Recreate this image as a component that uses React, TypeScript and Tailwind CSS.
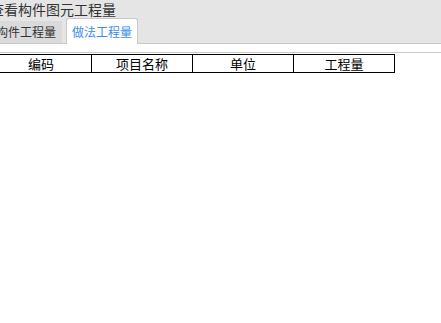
export default function App() {
  const cols = ["编码", "项目名称", "单位", "工程量"];
  return (
    <div className="w-[441px] h-[323px] bg-white overflow-hidden font-['Noto_Sans_CJK_SC','Noto_Sans',sans-serif]">
      <div className="ml-[-10px]">
        <div className="bg-[#e5e5e5] border-b border-[#c9c9c9]">
          <div className="h-[18px] text-[14px] leading-[18px] text-[#333333] whitespace-nowrap">查看构件图元工程量</div>
          <div className="h-[25px] flex items-end">
            <div className="h-[22px] px-[6px] bg-[#dadada] text-[12px] leading-[22px] text-[#333333] whitespace-nowrap">构件工程量</div>
            <div className="ml-[4px] h-[26px] -mb-px px-[5px] bg-white border border-b-0 border-[#c9c9c9] rounded-t-[3px] text-[12px] leading-[25px] text-[#3b8ee8] whitespace-nowrap">
              做法工程量
            </div>
          </div>
        </div>
        <div className="h-[8px]" />
        <div className="border-t border-[#c9c9c9] pt-px">
          <div className="flex w-max border-y border-l border-black">
            {cols.map((c) => (
              <div key={c} className="w-[101px] h-[17px] border-r border-black text-center text-[13px] leading-[17px] text-black">
                {c}
              </div>
            ))}
          </div>
        </div>
      </div>
    </div>
  );
}
